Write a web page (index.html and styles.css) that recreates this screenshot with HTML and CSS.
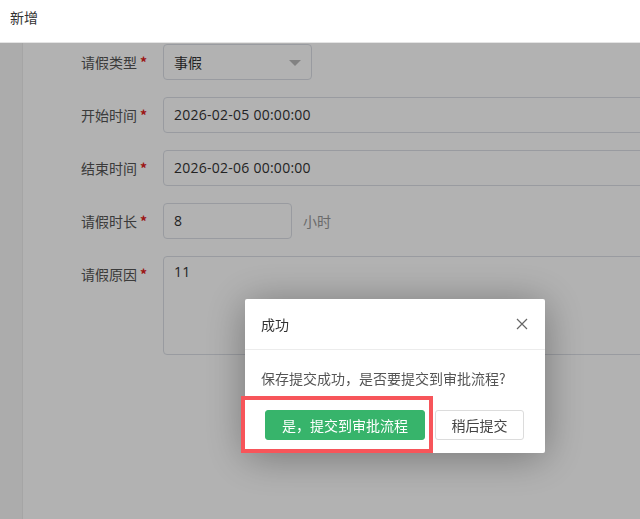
FILE: index.html
```html
<!DOCTYPE html>
<html lang="zh-CN">
<head>
<meta charset="utf-8">
<title>新增</title>
<link rel="stylesheet" href="styles.css">
</head>
<body>
<header class="topbar">新增</header>
<div class="main">
  <aside class="side"></aside>
  <section class="content">
    <div class="row">
      <label class="label">请假类型<span class="req">*</span></label>
      <div class="field select w-select">事假<span class="caret"></span></div>
    </div>
    <div class="row">
      <label class="label">开始时间<span class="req">*</span></label>
      <div class="field num w-long">2026-02-05 00:00:00</div>
    </div>
    <div class="row">
      <label class="label">结束时间<span class="req">*</span></label>
      <div class="field num w-long">2026-02-06 00:00:00</div>
    </div>
    <div class="row">
      <label class="label">请假时长<span class="req">*</span></label>
      <div class="field num w-short">8</div>
      <span class="unit">小时</span>
    </div>
    <div class="row row-top">
      <label class="label">请假原因<span class="req">*</span></label>
      <div class="field num area w-long">11</div>
    </div>
  </section>
</div>
<div class="mask"></div>
<div class="dialog">
  <div class="dlg-head">
    <span class="dlg-title">成功</span>
    <svg class="close" width="12" height="12" viewBox="0 0 12 12"><path d="M1 1L11 11M11 1L1 11" stroke="#666" stroke-width="1.2" fill="none"/></svg>
  </div>
  <div class="dlg-body">保存提交成功，是否要提交到审批流程?</div>
  <div class="dlg-foot">
    <button class="btn btn-primary">是，提交到审批流程</button>
    <button class="btn btn-default">稍后提交</button>
  </div>
</div>
<div class="highlight"></div>
</body>
</html>
```
FILE: styles.css
```css
* { box-sizing: border-box; }
html, body { margin: 0; padding: 0; height: 100%; overflow: hidden; }
body {
  font-family: "Noto Sans CJK SC", "Open Sans", sans-serif;
  font-size: 14px;
  color: #333;
  background: #fff;
}
.topbar {
  position: relative;
  z-index: 3;
  height: 43px;
  line-height: 35px;
  padding-left: 10px;
  background: #fff;
  border-bottom: 1px solid #e4e4e4;
  color: #333;
}
.main { display: flex; height: 476px; }
.side { flex: none; width: 23px; background: #f6f6f6; border-right: 1px solid #ececec; }
.content { flex: 1; min-width: 0; padding-top: 1px; background: #fff; }
.row { display: flex; align-items: center; margin-bottom: 17px; height: 36px; }
.row-top { align-items: flex-start; height: auto; }
.label {
  flex: none;
  width: 124px;
  text-align: right;
  color: #555;
  line-height: 36px;
  margin-right: 16px;
  white-space: nowrap;
}
.req { color: #e02020; margin-left: 3px; font-weight: bold; }
.field {
  position: relative;
  height: 36px;
  line-height: 34px;
  border: 1px solid #dcdfe6;
  border-radius: 4px;
  padding: 0 10px;
  color: #333;
  background: #fff;
  flex: none;
}
.num { font-family: "Open Sans", "Noto Sans CJK SC", sans-serif; letter-spacing: 0.25px; }
.w-select { width: 149px; }
.w-long { width: 500px; }
.w-short { width: 129px; }
.caret {
  position: absolute;
  right: 10px;
  top: 15px;
  width: 0; height: 0;
  border-left: 6px solid transparent;
  border-right: 6px solid transparent;
  border-top: 6px solid #bbb;
}
.unit { margin-left: 11px; color: #999; }
.area { height: 99px; line-height: 20px; padding-top: 5px; }
.mask {
  position: fixed;
  left: 0; right: 0; top: 43px; bottom: 0;
  background: rgba(0,0,0,0.3);
  z-index: 2;
}
.dialog {
  position: fixed;
  left: 245px; top: 299px;
  width: 300px; height: 154px;
  background: #fff;
  border-radius: 2px;
  box-shadow: 0 4px 40px rgba(0,0,0,0.35);
  z-index: 4;
}
.dlg-head {
  height: 51px;
  padding: 0 16px;
  display: flex;
  align-items: center;
  justify-content: space-between;
  border-bottom: 1px solid #ececec;
  color: #333;
}
.close { margin-right: 1px; }
.dlg-body { padding: 18px 16px 0; line-height: 20px; color: #555; }
.dlg-foot { display: flex; gap: 10px; padding: 22px 0 0 20px; }
.btn {
  height: 30px;
  font-family: inherit;
  font-size: 14px;
  border-radius: 3px;
  padding: 0;
  cursor: pointer;
}
.btn-primary { width: 160px; background: #37b46b; border: 1px solid #37b46b; color: #fff; }
.btn-default { width: 89px; background: #fff; border: 1px solid #dcdcdc; color: #444; }
.highlight {
  position: fixed;
  left: 241px; top: 396px;
  width: 192px; height: 57px;
  border: 4px solid #f7555a;
  z-index: 5;
}
```
